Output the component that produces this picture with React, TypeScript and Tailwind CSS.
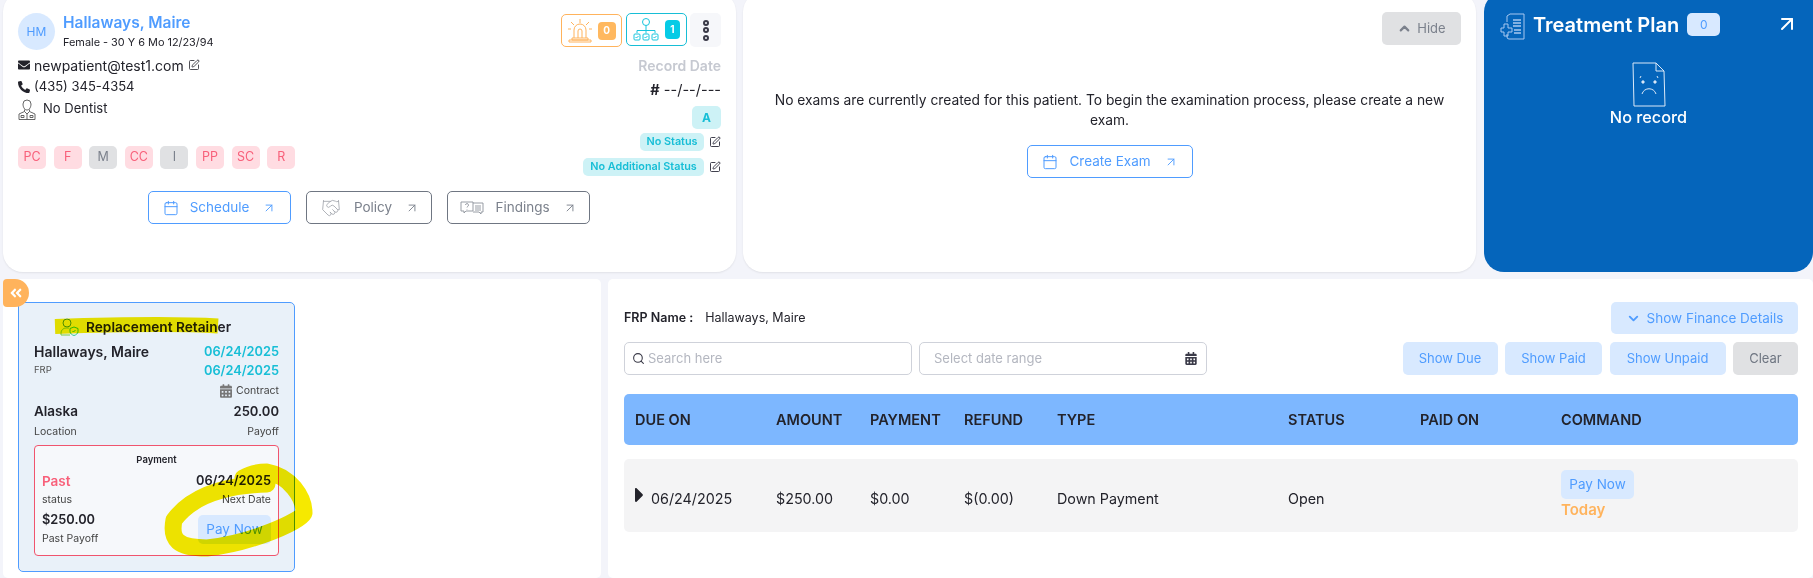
import { ArrowUpRight, Calendar, ChevronDown, ChevronUp, Handshake, Search, SquarePen } from "lucide-react";
import { FaAngleDoubleLeft, FaCalendarAlt, FaCaretRight, FaEnvelope, FaPhoneAlt } from "react-icons/fa";

const tags = [
  { label: "PC", on: true },
  { label: "F", on: true },
  { label: "M", on: false },
  { label: "CC", on: true },
  { label: "I", on: false },
  { label: "PP", on: true },
  { label: "SC", on: true },
  { label: "R", on: true },
];

const rowCols = "grid grid-cols-[141px_94px_94px_93px_231px_132px_141px_1fr]";

function OutlineButton({ icon, label, width, blue }: { icon: React.ReactNode; label: string; width: string; blue?: boolean }) {
  return (
    <div
      className={`flex h-[33px] items-center justify-center gap-[11px] rounded-[5px] border text-[13.500px] ${width} ${
        blue ? "border-[#4f9cff] text-[#4f9cff]" : "border-[#6f7682] text-[#7b818c]"
      }`}
    >
      {icon}
      <span>{label}</span>
      <ArrowUpRight className="ml-[2px] h-[14px] w-[14px]" strokeWidth={1.6} />
    </div>
  );
}

function PaleButton({ label, width, gray }: { label: string; width: string; gray?: boolean }) {
  return (
    <div
      className={`flex h-[33px] items-center justify-center rounded-[5px] text-[13px] ${width} ${
        gray ? "bg-[#e0e1e3] text-[#6f7682]" : "bg-[#d8e9ff] text-[#4f9cff]"
      }`}
    >
      {label}
    </div>
  );
}

function StatusBadge({ label, width }: { label: string; width: string }) {
  return (
    <div className="flex items-center gap-[5px]">
      <div className={`flex h-[18px] items-center justify-center rounded-[5px] bg-[#cdf2f6] text-[10.800px] font-semibold text-[#17bed6] ${width}`}>
        {label}
      </div>
      <SquarePen className="h-[12px] w-[12px] text-[#2b2b3a]" strokeWidth={1.8} />
    </div>
  );
}

function SirenIcon() {
  return (
    <svg width="24" height="26" viewBox="0 0 24 26" fill="none" stroke="#ffb35c" strokeWidth="1">
      <path d="M12 1v4M3 4l3 3M21 4l-3 3M0 11h3M21 11h3" />
      <path d="M6 20v-8a6 6 0 0 1 12 0v8" />
      <path d="M10 20v-7a2 2 0 0 1 4 0v7" />
      <path d="M4 20h16v2H4zM1 22h22v2H1z" />
    </svg>
  );
}

function TreeIcon() {
  return (
    <svg width="26" height="24" viewBox="0 0 26 24" fill="none" stroke="#17c5de" strokeWidth="1">
      <circle cx="13" cy="4" r="3.5" />
      <path d="M13 7.500v8M4 15v-2.500h18V15" />
      <rect x="1" y="16" width="6" height="6" rx="1" />
      <rect x="10" y="16" width="6" height="6" rx="1" />
      <rect x="19" y="16" width="6" height="6" rx="1" />
      <path d="M2.500 19l1 1 2-2M11.500 19l1 1 2-2M20.500 19l1 1 2-2" />
    </svg>
  );
}

function DentistIcon() {
  return (
    <svg width="18" height="21" viewBox="0 0 18 21" fill="none" stroke="#555" strokeWidth="0.9">
      <path d="M5 5a4 4 0 0 1 8 0c0 3-1.500 6-4 6s-4-3-4-6z" />
      <path d="M6.500 10.500v2L1 15v5.500h16V15l-5.500-2.500v-2" />
      <path d="M6.500 12.500L9 15l2.500-2.500M3 16.500h3v2H3zM12 16.500h3v2h-3zM9 15v5.500" />
    </svg>
  );
}

function FindingsIcon() {
  return (
    <svg width="24" height="14" viewBox="0 0 24 14" fill="none" stroke="#8d929b" strokeWidth="0.9">
      <path d="M1 1h12v9H6l-2 2v-2H1z" />
      <path d="M13 2h10v9h-2v2l-2-2h-6" />
      <path d="M15 5h6M15 7h6M15 9h6" />
      <path d="M5.500 4a1.500 1.500 0 1 1 2 1.500L7 6.500M7 8v.5" />
    </svg>
  );
}

function PlanIcon() {
  return (
    <svg width="25" height="27" viewBox="0 0 25 27" fill="none" stroke="#a8c8f0" strokeWidth="1">
      <path d="M7 9V3l3-2h14v25H9a2 2 0 0 1-2-2v-3" />
      <path d="M13 7h8M13 10h8M13 13h8M14 17h7M14 20h7" strokeWidth="1.500" />
      <path d="M4 11h4v4h4v4H8v4H4v-4H1v-4h3z" />
    </svg>
  );
}

function SadDocIcon() {
  return (
    <svg width="34" height="45" viewBox="0 0 34 45" fill="none" stroke="#dce9f8" strokeWidth="1">
      <path d="M1 1h23l8 8 1 35H2z" />
      <path d="M24 1v8h8" />
      <circle cx="11" cy="20" r="1.200" fill="#dce9f8" />
      <circle cx="23" cy="20" r="1.200" fill="#dce9f8" />
      <path d="M10 32c2-7 12-7 14 0M8 16l1-2M26 16l-1-2" />
    </svg>
  );
}

function UserShieldIcon() {
  return (
    <svg width="19" height="18" viewBox="0 0 19 18" fill="none" strokeWidth="1">
      <circle cx="7" cy="5" r="4" stroke="#4f9cff" />
      <path d="M1 17v-2a5 5 0 0 1 5-5h3" stroke="#7acb3c" />
      <path d="M1 17h9" stroke="#7acb3c" />
      <path d="M14 9l4 1.500v3c0 2-2 3.500-4 4-2-.5-4-2-4-4v-3z" stroke="#32c98c" />
      <path d="M12.500 13l1 1 2-2" stroke="#32c98c" />
    </svg>
  );
}

export default function App() {
  return (
    <div className="relative h-[578px] w-[1813px] overflow-hidden bg-[#f3f4fa] font-['Inter',sans-serif] text-[#23232b]">
      <div className="flex h-[272px] gap-[7px] pl-[3px]">
        {/* patient card */}
        <div className="-mt-[8px] flex h-[280px] w-[733px] flex-col rounded-[20px] bg-white pl-[15px] pr-[15px] pt-[21px] shadow-[0_1px_2px_rgba(0,0,0,0.08)]">
          <div className="flex h-[178px] justify-between">
            <div>
              <div className="flex items-center gap-[8px]">
                <div className="flex h-[37px] w-[37px] items-center justify-center rounded-full bg-[#d8e9ff] text-[12px] text-[#4f9cff]">
                  HM
                </div>
                <div>
                  <div className="text-[15.500px] font-semibold leading-[20px] text-[#4f9cff]">Hallaways, Maire</div>
                  <div className="mt-[2px] text-[10.900px] leading-[15px]">Female - 30 Y 6 Mo 12/23/94</div>
                </div>
              </div>
              <div className="mt-[4px] flex h-[22px] items-center gap-[4px] text-[14px]">
                <FaEnvelope className="h-[12px] w-[12px]" />
                <span>newpatient@test1.com</span>
                <SquarePen className="h-[12px] w-[12px]" strokeWidth={1.6} />
              </div>
              <div className="flex h-[22px] items-center gap-[4px] text-[13px]">
                <FaPhoneAlt className="h-[12px] w-[12px]" />
                <span>(435) 345-4354</span>
              </div>
              <div className="flex h-[22px] items-center gap-[7px] text-[13px]">
                <DentistIcon />
                <span>No Dentist</span>
              </div>
              <div className="mt-[26px] flex gap-[7.600px]">
                {tags.map((t) => (
                  <div
                    key={t.label}
                    className={`flex h-[23px] w-[28px] items-center justify-center rounded-[5px] text-[12.500px] ${
                      t.on ? "bg-[#ffdce2] text-[#f8607a]" : "bg-[#e0e1e3] text-[#7b818c]"
                    }`}
                  >
                    {t.label}
                  </div>
                ))}
              </div>
            </div>
            <div className="flex flex-col items-end">
              <div className="flex items-start gap-[3px]">
                <div className="mr-[1px] mt-[1px] flex h-[33px] w-[61px] items-center justify-center gap-[6px] rounded-[5px] border border-[#ffb35c]">
                  <SirenIcon />
                  <div className="flex h-[18px] w-[18px] items-center justify-center rounded-[4px] bg-[#ffb85f] text-[10px] font-bold text-white">0</div>
                </div>
                <div className="flex h-[33px] w-[61px] items-center justify-center gap-[6px] rounded-[5px] border border-[#17bed6]">
                  <TreeIcon />
                  <div className="flex h-[19px] w-[15px] items-center justify-center rounded-[4px] bg-[#06cbe6] text-[10px] font-bold text-white">1</div>
                </div>
                <div className="flex h-[34px] w-[31px] flex-col items-center justify-center gap-[1.500px] rounded-[5px] bg-[#f6f7fa]">
                  <span className="h-[6px] w-[6px] rounded-full border-2 border-[#3a3a48]" />
                  <span className="h-[6px] w-[6px] rounded-full border-2 border-[#3a3a48]" />
                  <span className="h-[6px] w-[6px] rounded-full border-2 border-[#3a3a48]" />
                </div>
              </div>
              <div className="mt-[11px] text-[14px] font-semibold leading-[16px] text-[#c6c9d1]">Record Date</div>
              <div className="mt-[8px] text-[14.500px] leading-[16px]">
                <span className="font-bold">#</span> --/--/---
              </div>
              <div className="mt-[8px] flex h-[23px] w-[29px] items-center justify-center rounded-[5px] bg-[#cdf2f6] text-[12px] font-bold text-[#17bed6]">A</div>
              <div className="mt-[4px]">
                <StatusBadge label="No Status" width="w-[64px]" />
              </div>
              <div className="mt-[7px]">
                <StatusBadge label="No Additional Status" width="w-[121px]" />
              </div>
            </div>
          </div>
          <div className="ml-[130px] flex gap-[15px]">
            <OutlineButton blue width="w-[143px]" label="Schedule" icon={<Calendar className="h-[16px] w-[16px]" strokeWidth={1.5} />} />
            <OutlineButton width="w-[126px]" label="Policy" icon={<Handshake className="h-[20px] w-[24px] text-[#a0a4ab]" strokeWidth={1} />} />
            <OutlineButton width="w-[143px]" label="Findings" icon={<FindingsIcon />} />
          </div>
        </div>

        {/* exam card */}
        <div className="-mt-[8px] flex h-[280px] w-[733px] flex-col rounded-[20px] bg-white pr-[15px] pt-[20px] shadow-[0_1px_2px_rgba(0,0,0,0.08)]">
          <div className="flex h-[33px] w-[79px] items-center justify-center gap-[5px] self-end rounded-[5px] bg-[#e0e1e3] text-[13px] text-[#7b818c]">
            <ChevronUp className="h-[15px] w-[15px]" strokeWidth={3.5} />
            Hide
          </div>
          <div className="mx-auto mt-[45px] w-[690px] pl-[15px] text-center text-[13.800px] leading-[20px]">
            No exams are currently created for this patient. To begin the examination process, please create a new exam.
          </div>
          <div className="ml-[284px] mt-[15px]">
            <OutlineButton blue width="w-[166px]" label="Create Exam" icon={<Calendar className="h-[16px] w-[16px]" strokeWidth={1.5} />} />
          </div>
        </div>

        {/* treatment plan */}
        <div className="-mt-[8px] ml-[1px] flex h-[280px] flex-1 flex-col rounded-l-[20px] rounded-br-[20px] bg-[#0565bb] pl-[16px] pr-[14px] pt-[21px] text-white">
          <div className="flex items-start">
            <PlanIcon />
            <div className="ml-[8px] text-[20px] font-semibold leading-[24px]">Treatment Plan</div>
            <div className="ml-[8px] flex h-[23px] w-[33px] items-center justify-center rounded-[5px] bg-[#d8e9ff] text-[12px] text-[#4f9cff]">0</div>
            <ArrowUpRight className="-mt-[1px] ml-auto h-[24px] w-[24px]" strokeWidth={2} />
          </div>
          <div className="mt-[22px] flex flex-col items-center pr-[2px]">
            <SadDocIcon />
            <div className="-mt-[2px] text-[16.300px] font-medium">No record</div>
          </div>
        </div>
      </div>

      <div className="mt-[7px] flex h-[299px] gap-[7px] pl-[3px]">
        {/* contract panel */}
        <div className="relative w-[598px] rounded-[5px] bg-white pl-[15px] pt-[23px]">
          <div className="absolute left-0 top-0 flex h-[28px] w-[26px] items-center justify-center rounded-r-[14px] rounded-l-[4px] bg-[#ffb35c] text-white">
            <FaAngleDoubleLeft className="h-[14px] w-[14px]" />
          </div>
          <div className="h-[270px] w-[277px] rounded-[5px] border border-[#4f9cff] bg-[#e9f1f9] px-[15px] pt-[15px]">
            <div className="flex items-center gap-[7px] pl-[26px] text-[13.700px] font-semibold leading-[18px]">
              <UserShieldIcon />
              Replacement Retainer
            </div>
            <div className="mt-[7px] flex justify-between">
              <div>
                <div className="text-[14px] font-semibold leading-[18px]">Hallaways, Maire</div>
                <div className="text-[9.500px] leading-[18px] text-[#555]">FRP</div>
              </div>
              <div className="text-right text-[12.800px] font-semibold leading-[18.500px] text-[#17bed6]">
                <div>06/24/2025</div>
                <div>06/24/2025</div>
              </div>
            </div>
            <div className="mt-[3px] flex items-center justify-end gap-[4px] text-[10.500px] leading-[16px] text-[#444]">
              <FaCalendarAlt className="h-[14px] w-[12px] text-[#777]" />
              Contract
            </div>
            <div className="mt-[2px] flex justify-between text-[13.500px] font-semibold leading-[20px]">
              <span>Alaska</span>
              <span className="text-[13px]">250.00</span>
            </div>
            <div className="mt-[2px] flex justify-between text-[10.500px] leading-[18px] text-[#444]">
              <span>Location</span>
              <span>Payoff</span>
            </div>
            <div className="mt-[4px] h-[111px] rounded-[4px] border border-[#f0546e] bg-[#f6f8fb] px-[7px] pt-[7px]">
              <div className="text-center text-[9.500px] font-semibold leading-[14px]">Payment</div>
              <div className="mt-[5px] flex justify-between text-[13.500px] font-semibold leading-[18px]">
                <span className="text-[#f8607a]">Past</span>
                <span className="text-[12.800px]">06/24/2025</span>
              </div>
              <div className="mt-[1px] flex justify-between text-[10.500px] leading-[18px] text-[#444]">
                <span>status</span>
                <span>Next Date</span>
              </div>
              <div className="mt-[1px] flex items-center justify-between">
                <div>
                  <div className="text-[12.800px] font-semibold leading-[20px]">$250.00</div>
                  <div className="text-[10.500px] leading-[18px] text-[#444]">Past Payoff</div>
                </div>
                <div className="flex h-[29px] w-[73px] items-center justify-center rounded-[5px] bg-[#d8e9ff] text-[13.500px] text-[#4f9cff]">Pay Now</div>
              </div>
            </div>
          </div>
        </div>

        {/* payments panel */}
        <div className="flex-1 rounded-[5px] bg-white pl-[16px] pr-[15px] pt-[23px]">
          <div className="flex h-[32px] items-center justify-between">
            <div className="flex items-center gap-[12px] text-[12.500px]">
              <span className="font-semibold">FRP Name :</span>
              <span>Hallaways, Maire</span>
            </div>
            <div className="flex h-[32px] w-[187px] items-center justify-center gap-[6px] rounded-[5px] bg-[#d8e9ff] text-[13.500px] text-[#4f9cff]">
              <ChevronDown className="h-[15px] w-[15px]" strokeWidth={3} />
              Show Finance Details
            </div>
          </div>
          <div className="mt-[8px] flex h-[33px] items-center">
            <div className="flex h-[33px] w-[288px] items-center gap-[3px] rounded-[5px] border border-[#cfd2da] pl-[7px] text-[13px] text-[#b4b7c0]">
              <Search className="h-[13px] w-[13px] text-[#3a3a48]" strokeWidth={2} />
              Search here
            </div>
            <div className="ml-[7px] flex h-[33px] w-[288px] items-center justify-between rounded-[5px] border border-[#cfd2da] pl-[14px] pr-[9px] text-[13px] text-[#b4b7c0]">
              Select date range
              <FaCalendarAlt className="h-[13px] w-[12px] text-[#3a3a48]" />
            </div>
            <div className="ml-auto flex gap-[7.500px]">
              <PaleButton label="Show Due" width="w-[95px]" />
              <PaleButton label="Show Paid" width="w-[97px]" />
              <PaleButton label="Show Unpaid" width="w-[116px]" />
              <PaleButton gray label="Clear" width="w-[65px]" />
            </div>
          </div>
          <div className={`${rowCols} mt-[19px] h-[51px] items-center rounded-[5px] bg-[#7db7ff] pl-[11px] text-[14.500px] font-semibold`}>
            <div>DUE ON</div>
            <div>AMOUNT</div>
            <div>PAYMENT</div>
            <div>REFUND</div>
            <div>TYPE</div>
            <div>STATUS</div>
            <div>PAID ON</div>
            <div>COMMAND</div>
          </div>
          <div className={`${rowCols} mt-[14px] h-[73px] items-center rounded-[5px] bg-[#f4f4f5] pl-[11px] text-[14.300px]`}>
            <div className="flex items-center gap-[7px] pt-[6px]">
              <FaCaretRight className="-mt-[8px] h-[24px] w-[9px] shrink-0" />
              06/24/2025
            </div>
            <div className="pt-[6px]">$250.00</div>
            <div className="pt-[6px]">$0.00</div>
            <div className="pt-[6px]">$(0.00)</div>
            <div className="pt-[6px]">Down Payment</div>
            <div className="pt-[6px]">Open</div>
            <div />
            <div>
              <div className="flex h-[29px] w-[73px] items-center justify-center rounded-[5px] bg-[#d8e9ff] text-[13.500px] text-[#4f9cff]">Pay Now</div>
              <div className="text-[15px] font-semibold leading-[22px] text-[#ffb35c]">Today</div>
            </div>
          </div>
        </div>
      </div>

      {/* highlighter marks drawn over the screenshot */}
      <svg className="pointer-events-none absolute left-0 top-0 mix-blend-multiply" width="1813" height="578" viewBox="0 0 1813 578" fill="none">
        <path d="M55 326.500C100 325 170 323 218 326" stroke="#f6e900" strokeWidth="15" />
        <path
          d="M267 484C233 485 194 493 174 520C170 540 178 548 207 548C253 543 303 520 304 513C304 497 290 476 267 472C255 472 248 475 243 478"
          stroke="#f6e900"
          strokeWidth="17"
          strokeLinecap="round"
          strokeLinejoin="round"
        />
      </svg>
    </div>
  );
}
